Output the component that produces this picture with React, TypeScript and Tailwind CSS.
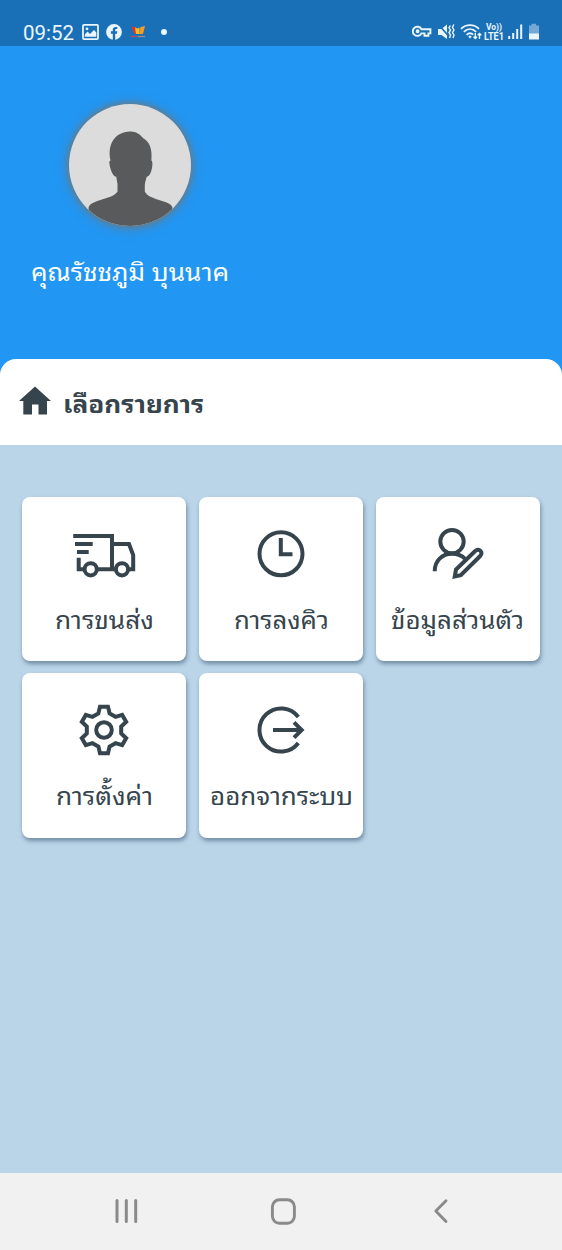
import React from 'react'

type MenuItem = {
  id: string
  label: string
  width: number
  icon: React.ReactNode
}

function Svg({ children }: { children: React.ReactNode }) {
  return (
    <svg className="w-[72px] h-[60px] shrink-0" viewBox="0 0 72 60" fill="none" stroke="currentColor" strokeWidth="4">
      {children}
    </svg>
  )
}

const TEETH = [0, 60, 120, 180, 240, 300]

// six teeth, each one rotated round the hub
function gearPath() {
  const tooth = [[-5.6, -16.6], [-4, -23.3], [4, -23.3], [5.6, -16.6]]
  const points = TEETH.flatMap((deg) => {
    const a = (deg * Math.PI) / 180
    return tooth.map(([x, y]) => {
      const px = 36 + x * Math.cos(a) - y * Math.sin(a)
      const py = 30 + x * Math.sin(a) + y * Math.cos(a)
      return `${px.toFixed(2)} ${py.toFixed(2)}`
    })
  })
  return `M${points.join('L')}Z`
}

const menu: MenuItem[] = [
  {
    id: 'transport',
    label: 'การขนส่ง',
    width: 99,
    icon: (
      <Svg>
        <path d="M5.2 12H44V45.3M7 20H24.7M9 28H20.7M10.7 33.7V45.3H16M29.3 45.3H47.5M60.6 45.3H65.2V31L61 20H44" />
        <circle cx="22.7" cy="45.3" r="6.1" />
        <circle cx="54" cy="45.3" r="6.1" />
      </Svg>
    ),
  },
  {
    id: 'queue',
    label: 'การลงคิว',
    width: 95,
    icon: (
      <Svg>
        <circle cx="36" cy="29.8" r="21.5" />
        <path d="M35.8 14V30.3H47.5" />
      </Svg>
    ),
  },
  {
    id: 'profile',
    label: 'ข้อมูลส่วนตัว',
    width: 133,
    icon: (
      <Svg>
        <circle cx="30" cy="17.6" r="11.7" />
        <path d="M12.7 47.2C12.7 37 20 29.8 30 29.8C35.5 29.8 40 31.5 43.2 35" />
        <path d="M32.8 52.4L34 45.5L53.2 27C57 23.5 61.8 28.4 58.2 32L38.8 51.2Z" />
      </Svg>
    ),
  },
  {
    id: 'settings',
    label: 'การตั้งค่า',
    width: 97,
    icon: (
      <Svg>
        <path d={gearPath()} />
        <circle cx="36" cy="30" r="7.8" />
      </Svg>
    ),
  },
  {
    id: 'logout',
    label: 'ออกจากระบบ',
    width: 143,
    icon: (
      <Svg>
        <path d="M53.3 17A21.6 21.6 0 1 0 53.3 43M28 30H56M49 22.3L56.7 30L49 37.7" />
      </Svg>
    ),
  },
]

function StatusBar() {
  return (
    <div className="h-[46px] shrink-0 bg-[#1a70b7] pt-[18px] pl-[23px] pr-[22px] flex items-center justify-between text-[#eaf5fd]">
      <div className="flex items-center">
        <span className="pt-px font-[Roboto] text-[20.5px] leading-7 w-[52px] whitespace-nowrap">09:52</span>
        <svg className="ml-[7px] w-[17px] h-4" viewBox="0 0 17 16" fill="none" stroke="currentColor" strokeWidth="1.8">
          <rect x="1" y="0.9" width="15" height="14.2" rx="1" />
          <path d="M2.8 12.8V10.5L5.5 7.5L8 10L12 6L14.3 8.5V12.8Z" fill="currentColor" stroke="none" />
          <circle cx="5" cy="4.8" r="1.4" fill="currentColor" stroke="none" />
        </svg>
        <svg className="ml-[7px] w-4 h-4" viewBox="0 0 16 16">
          <circle cx="8" cy="8" r="7.9" fill="currentColor" />
          <path d="M6.8 16V9.7H4.9V7.2H6.8V5.7C6.8 3.8 8 2.9 9.6 2.9L11.3 3.1V5.1H10.3C9.4 5.1 9.2 5.6 9.2 6.2V7.2H11.3L10.9 9.7H9.2V16Z" fill="#1a70b7" />
        </svg>
        <svg className="ml-2 w-4 h-3.5" viewBox="0 0 16 14">
          <path d="M1.5 1.5L5 2L7.5 9L4 8.5Z" fill="#e5302a" />
          <path d="M5 2.5L7.5 3.5L9.5 2.5L9.5 9H6Z" fill="#f6c022" />
          <path d="M15 1L10.5 2L9 9H13Z" fill="#f59a23" />
          <path d="M0.5 11.5H8" stroke="#b04a68" strokeWidth="1.3" />
          <path d="M8 11.5H15" stroke="#9a8f7c" strokeWidth="1.3" />
        </svg>
        <span className="ml-[15px] w-1.5 h-1.5 rounded-full bg-current" />
      </div>

      <svg className="w-[128px] h-[18px]" viewBox="0 0 128 18" fill="none" stroke="currentColor" strokeWidth="1.9">
        {/* vpn key */}
        <path d="M9.5 6.2A4.6 4.6 0 1 0 9.5 10.4H12.5V12.8H16.4V10.4H18.4V6.2Z" />
        <circle cx="5.6" cy="8.3" r="1" />
        {/* muted */}
        <path d="M26 6H29.5L35 1.5V16L29.5 12H26Z" fill="currentColor" stroke="none" />
        <path d="M26 1L37 13.5" stroke="#1a70b7" strokeWidth="1.8" />
        <path d="M38.3 2.5L37 4.8L38.6 7L37 9.5L38.6 12L37.5 15M41.8 1.5L40.5 4.5L42 7L40.5 9.5L42 12L41 15" strokeWidth="1.4" />
        {/* wifi */}
        <path d="M49 5.8C54 0.8 62 0.8 67 5.8M51.8 8.8C55.6 5.2 60.4 5.2 64.2 8.8M54.6 11.8C56.7 9.9 59.3 9.9 61.2 11.6" strokeWidth="1.8" />
        <path d="M56.2 13.6L58 15.6L59.8 13.6L58 12.6Z" fill="currentColor" stroke="none" />
        <path d="M63.3 10V15.5M61.5 13.7L63.3 15.5L65.1 13.7M67.5 16V10.5M65.7 12.3L67.5 10.5L69.3 12.3" strokeWidth="1.4" />
        <text x="74" y="7.4" className="font-[Roboto] font-bold text-[9px]" fill="currentColor" stroke="none" textLength="16" lengthAdjust="spacingAndGlyphs">Vo))</text>
        <text x="72" y="16.6" className="font-[Roboto] font-bold text-[10px]" fill="currentColor" stroke="none" textLength="20" lengthAdjust="spacingAndGlyphs">LTE1</text>
        {/* signal */}
        <path d="M97.2 13V16M101.2 10V16M105.2 6V16M109.2 1.5V16" strokeWidth="2" />
        {/* battery */}
        <path d="M117 2.5H119.5V0.8H124V2.5H127V11H117Z" fill="#75a9d4" stroke="none" />
        <path d="M117 10.5H127V16.5H117Z" fill="currentColor" stroke="none" />
      </svg>
    </div>
  )
}

function Avatar() {
  return (
    <div className="ml-[38px] w-[122px] h-[122px] rounded-full bg-[#dcdcdc] overflow-hidden shadow-[0_0_4px_2px_#58809b,0_1px_11px_2px_#4d85b3]">
      <svg className="w-full h-full" viewBox="0 0 122 122" fill="#595a5c">
        <path d="M61 27.5C66 27 71 30 74 34C81 38 83.5 46 82.3 56.5C84.5 57 83.2 67 80.7 70.5C79.8 72 79 72.5 77.7 72.8C77 76 76 78 75.8 81V87.5C78 92 84 94 90 96C96 98 104 99.5 103.5 105L96 122H26L19.5 105C19 99.5 27 97.5 33 95.5C39 93.5 46 92 48.5 87.5V80C48 77 47.5 75 47.3 72.8C44 72.5 42 67 40.8 62C40.3 58 40 57 41.5 56.5C38 40 46 28 61 27.5Z" />
      </svg>
    </div>
  )
}

// svg text keeps the Thai label at a fixed width
function Label({ text, width, className }: { text: string; width: number; className: string }) {
  return (
    <svg className={className} width={width} height="44" viewBox={`0 0 ${width} 44`} overflow="visible" fill="currentColor">
      <text x="0" y="30" textLength={width} lengthAdjust="spacingAndGlyphs">{text}</text>
    </svg>
  )
}

function MenuCard({ item }: { item: MenuItem }) {
  return (
    <button className="h-[164.5px] pt-[27px] rounded-lg bg-white shadow-[1px_3px_4px_#718da5] flex flex-col items-center text-[#36454d]">
      {item.icon}
      <Label text={item.label} width={item.width} className="mt-[15px] text-[25px]" />
    </button>
  )
}

function NavBar() {
  return (
    <nav className="h-[77px] shrink-0 bg-[#f1f1f1] text-[#8a8a8a] flex items-start pt-6 pl-[113px]">
      <svg className="w-[26px] h-7" viewBox="0 0 26 28" fill="none" stroke="currentColor" strokeWidth="3" strokeLinecap="round">
        <path d="M4 3.5V24.5M13.3 3.5V24.5M22.7 3.5V24.5" />
      </svg>
      <svg className="ml-[131px] w-7 h-7" viewBox="0 0 28 28" fill="none" stroke="currentColor" strokeWidth="2.9">
        <rect x="2.4" y="2.8" width="22" height="23.5" rx="7" />
      </svg>
      <svg className="ml-[135px] w-4 h-7" viewBox="0 0 16 28" fill="none" stroke="currentColor" strokeWidth="2.9" strokeLinecap="round" strokeLinejoin="round">
        <path d="M13 3.7L2.8 14L13 24.5" />
      </svg>
    </nav>
  )
}

export default function App() {
  return (
    <div className="w-[562px] h-[1250px] flex flex-col bg-[#2196f3] font-['Noto_Sans_Thai_Looped','Loma','Waree','Noto_Sans',serif]">
      <StatusBar />

      <header className="h-[313px] shrink-0 pt-[58px] pl-[31px] text-white">
        <Avatar />
        <Label text="คุณรัชชภูมิ บุนนาค" width={198} className="mt-[25px] text-[25px]" />
      </header>

      <div className="h-[85.5px] shrink-0 rounded-t-2xl bg-white flex items-center pl-[19px] text-[#36454d]">
        <svg className="mb-[3px] w-8 h-8" viewBox="0 0 32 32" fill="currentColor">
          <path d="M16 2.5L32 17H28V30.5H19.5V20.5H13V30.5H4.3V17H0Z" />
        </svg>
        <Label text="เลือกรายการ" width={141} className="mt-1.5 ml-3 text-[25px] font-bold" />
      </div>

      <main className="grow bg-[#bad4e8] px-[22px] pt-[52px]">
        <div className="grid grid-cols-3 gap-[12.3px]">
          {menu.map((item) => (
            <MenuCard key={item.id} item={item} />
          ))}
        </div>
      </main>

      <NavBar />
    </div>
  )
}
